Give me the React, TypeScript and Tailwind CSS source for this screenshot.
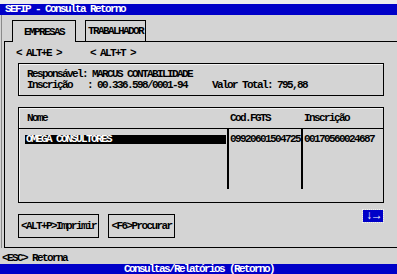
import React from "react";

const mono = "font-['Liberation_Mono',monospace] text-[11px] tracking-[-1.6px] leading-[10px] font-bold";

export default function App() {
    return (
        <div className={`w-[397px] h-[274px] bg-[#d4d4d4] text-black flex flex-col overflow-hidden ${mono}`}>
            <div className="h-[4px] bg-[#ededed]"></div>
            <div className="h-[11px] bg-[#0000c8] text-white pl-[5px] leading-[11px] whitespace-pre">SEFIP - Consulta Retorno</div>

            {/* tabs */}
            <div className="h-[26px] flex items-end pl-[10px] gap-[9px] border-l border-[#8a8a8a] ml-[1px]">
                <div className="relative z-10 w-[64px] h-[22px] -mb-px bg-[#d4d4d4] border border-b-0 border-black flex items-center justify-center">EMPRESAS</div>
                <div className="w-[61px] h-[21px] border border-b-0 border-black flex items-center justify-center">TRABALHADOR</div>
            </div>

            <div className="flex ml-[1px] border-l border-[#8a8a8a]">
                <div className="ml-[2px] flex-1 h-[207px] border-l border-t border-b border-black flex flex-col">
                    <div className="flex pl-[11px] pt-[6px] whitespace-pre">
                        <span className="w-[74px]">{"< ALT+E >"}</span>
                        <span>{"< ALT+T >"}</span>
                    </div>

                    {/* info box */}
                    <div className="ml-[13px] mt-[5px] w-[366px] h-[33px] border border-black shadow-[inset_1px_1px_0_#f2f2f2] pl-[8px] pt-[5px] leading-[11px] whitespace-pre">
                        <div>Responsável: MARCUS CONTABILIDADE</div>
                        <div>Inscrição   : 00.336.598/0001-94     Valor Total: 795,88</div>
                    </div>

                    {/* table */}
                    <div className="ml-[13px] mt-[11px] w-[366px] h-[96px] border border-black shadow-[inset_1px_1px_0_#f2f2f2] flex flex-col">
                        <div className="h-[21px] border-b border-black flex items-center">
                            <span className="w-[209px] pl-[8px]">Nome</span>
                            <span className="w-[74px] pl-[2px]">Cod.FGTS</span>
                            <span className="pl-[2px]">Inscrição</span>
                        </div>
                        <div className="flex h-[60px]">
                            <div className="w-[208px] pl-[6px] pr-[1px] pt-[6px]">
                                <div className="h-[9px] leading-[9px] bg-black text-white pl-[1px]">OMEGA CONSULTORES</div>
                            </div>
                            <div className="w-[74px] border-l-2 border-black pl-[1px] pt-[6px] leading-[9px]">09920601504725</div>
                            <div className="border-l-2 border-black pl-[1px] pt-[6px] leading-[9px]">00170560024687</div>
                        </div>
                    </div>

                    {/* buttons */}
                    <div className="flex items-start ml-[13px] mt-[7px] w-[366px]">
                        <div className="mt-[4px] w-[81px] h-[24px] border-[1.5px] border-black flex items-center justify-center">{"<ALT+P>Imprimir"}</div>
                        <div className="mt-[4px] ml-[9px] w-[67px] h-[24px] border-[1.5px] border-black flex items-center justify-center">{"<F6>Procurar"}</div>
                        <div className="ml-auto mr-[1px] w-[20px] h-[12px] bg-[#0000c8] text-white text-[12px] flex items-center justify-center outline outline-1 outline-dotted outline-[#f0f0f0] tracking-[0px]">↓→</div>
                    </div>
                </div>
            </div>

            <div className="h-[16px] pt-[5px] pl-[2px] whitespace-pre">{"<ESC> Retorna"}</div>
            <div className="h-[10px] bg-[#0000c8] text-white leading-[10px] pl-[124px] whitespace-pre">Consultas/Relatórios (Retorno)</div>
        </div>
    );
}
